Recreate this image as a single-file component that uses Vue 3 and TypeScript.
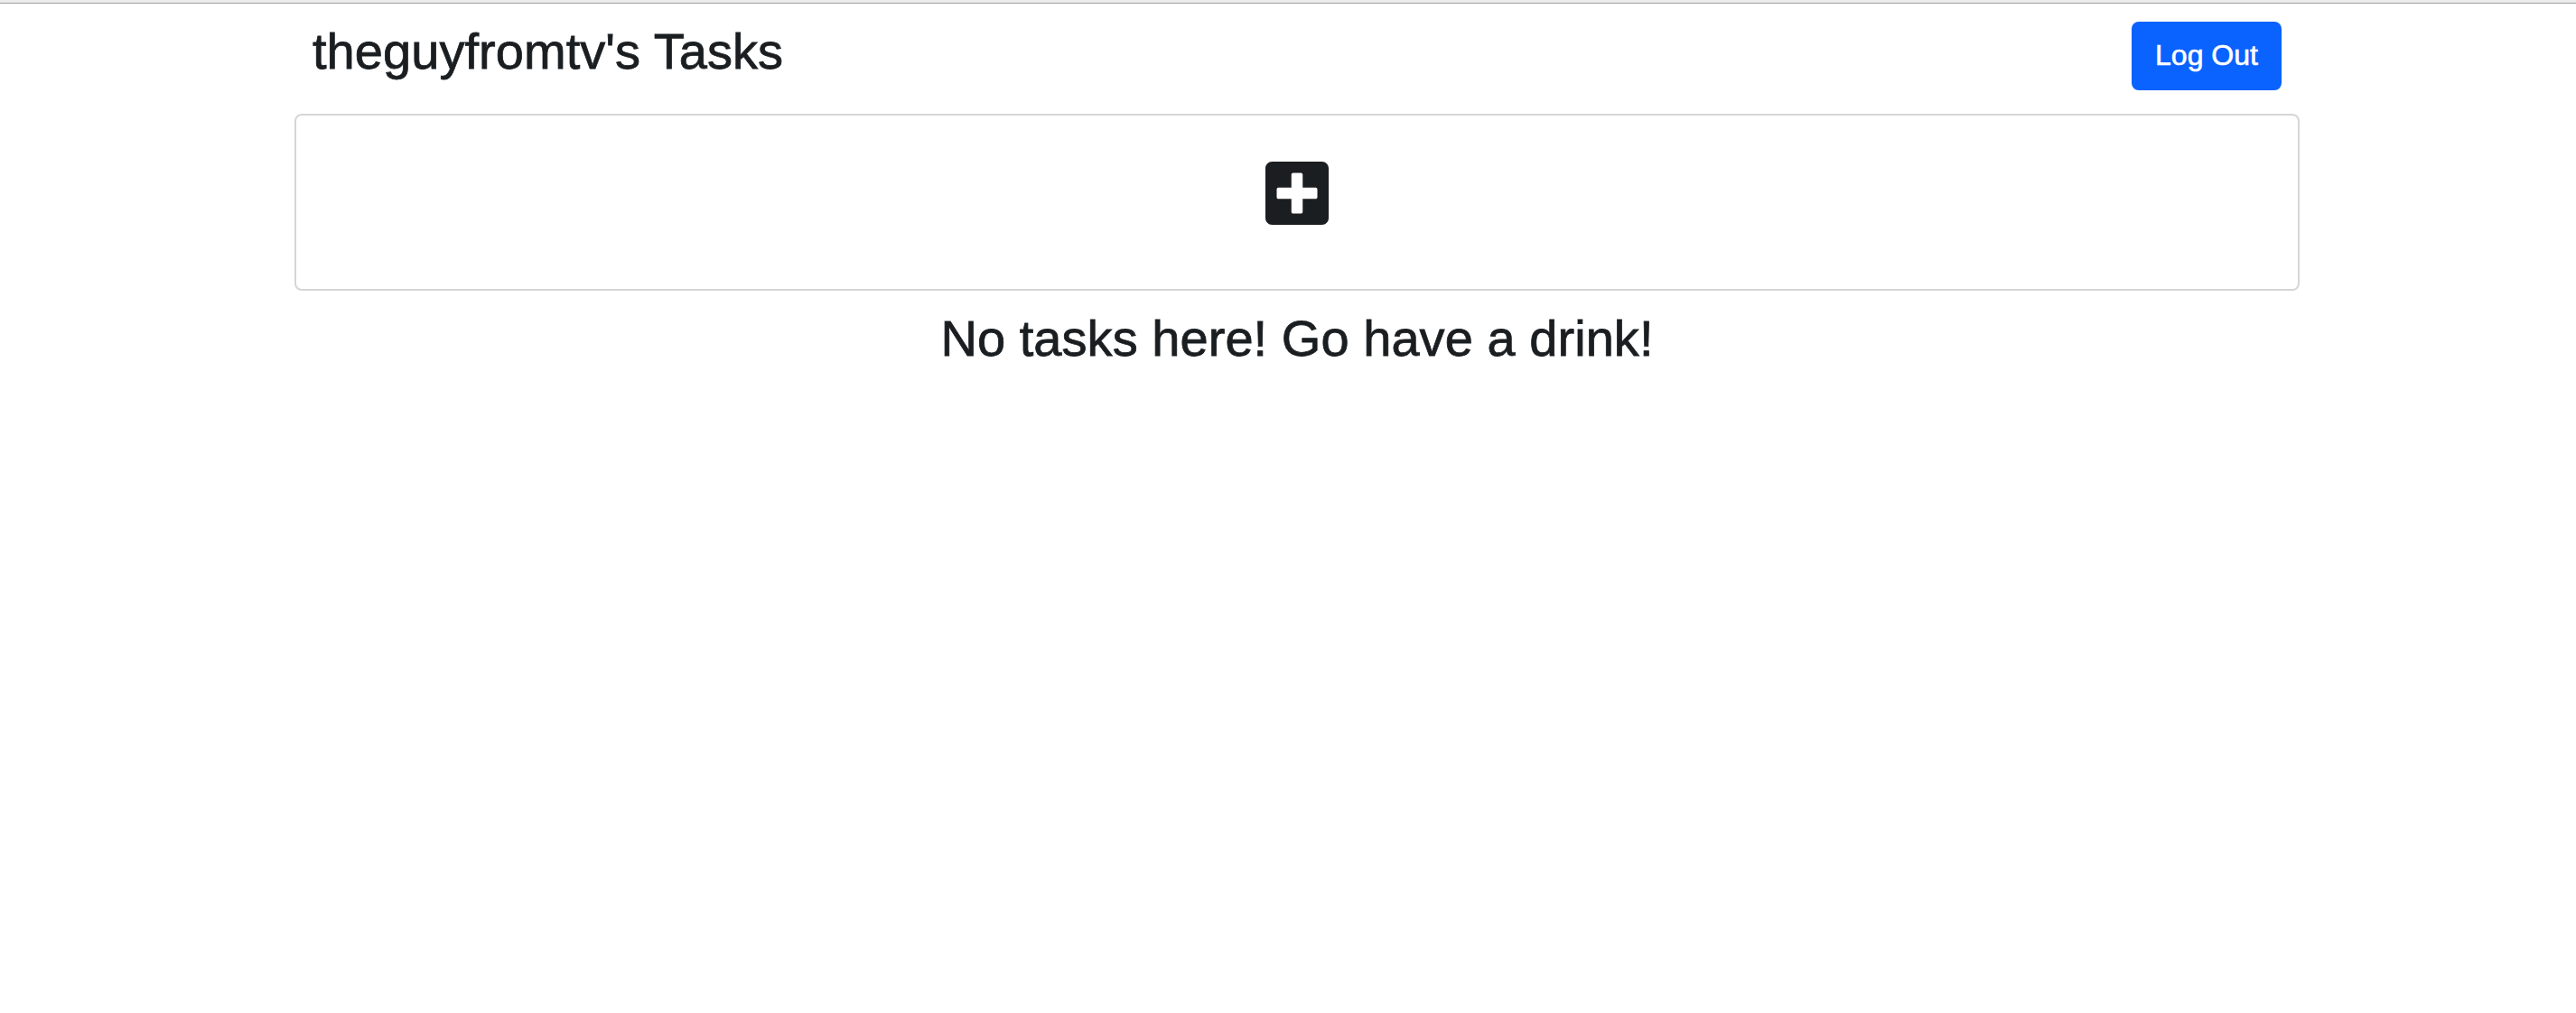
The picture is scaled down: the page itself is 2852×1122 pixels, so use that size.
<script setup lang="ts">
import { ref } from 'vue'

const username = ref<string>('theguyfromtv')
const tasks = ref<string[]>([])
</script>

<template>
  <div class="page">
    <div class="edge"></div>
    <main class="container">
      <header class="header">
        <h3 class="heading">{{ username }}'s Tasks</h3>
        <button class="logout" type="button">Log Out</button>
      </header>
      <section class="card">
        <svg class="plus" viewBox="0 32 448 448" aria-label="Add task">
          <path
            fill="currentColor"
            d="M400 32H48C21.5 32 0 53.5 0 80v352c0 26.5 21.5 48 48 48h352c26.5 0 48-21.5 48-48V80c0-26.5-21.5-48-48-48zm-32 252c0 6.6-5.4 12-12 12h-92v92c0 6.6-5.4 12-12 12h-56c-6.6 0-12-5.4-12-12v-92H92c-6.6 0-12-5.4-12-12v-56c0-6.6 5.4-12 12-12h92v-92c0-6.6 5.4-12 12-12h56c6.6 0 12 5.4 12 12v92h92c6.6 0 12 5.4 12 12v56z"
          />
        </svg>
      </section>
      <h3 v-if="tasks.length === 0" class="heading empty">No tasks here! Go have a drink!</h3>
    </main>
  </div>
</template>

<style>
body {
  margin: 0;
  background: #fff;
}
</style>

<style scoped>
.page {
  min-height: 1122px;
  color: #1a1e21;
  font-family: 'Liberation Sans', Arial, Helvetica, sans-serif;
}
.edge {
  box-sizing: border-box;
  height: 4px;
  background: #ececec;
  border-bottom: 1px solid #a0a0a0;
}
.container {
  width: 2220px;
  margin-left: 326px;
}
.header {
  box-sizing: border-box;
  height: 122px;
  padding: 19px 20px 0;
  display: flex;
  justify-content: space-between;
  align-items: flex-start;
}
.heading {
  margin: 0;
  font-size: 56px;
  font-weight: 400;
  line-height: 67px;
  letter-spacing: 0.05px;
  white-space: nowrap;
  -webkit-text-stroke: 0.8px currentColor;
}
.logout {
  box-sizing: border-box;
  width: 166px;
  height: 76px;
  margin-top: 1px;
  padding: 0 0 2px;
  border: 0;
  border-radius: 8px;
  background: #0a62ff;
  color: #fff;
  font-family: inherit;
  font-size: 32px;
  line-height: 48px;
  -webkit-text-stroke: 0.6px currentColor;
}
.card {
  box-sizing: border-box;
  height: 196px;
  padding-top: 51px;
  border: 2px solid #d6d6d6;
  border-radius: 8px;
  display: flex;
  justify-content: center;
  align-items: flex-start;
}
.plus {
  display: block;
  width: 70px;
  height: 70px;
}
.empty {
  margin-top: 19px;
  text-align: center;
}
</style>
